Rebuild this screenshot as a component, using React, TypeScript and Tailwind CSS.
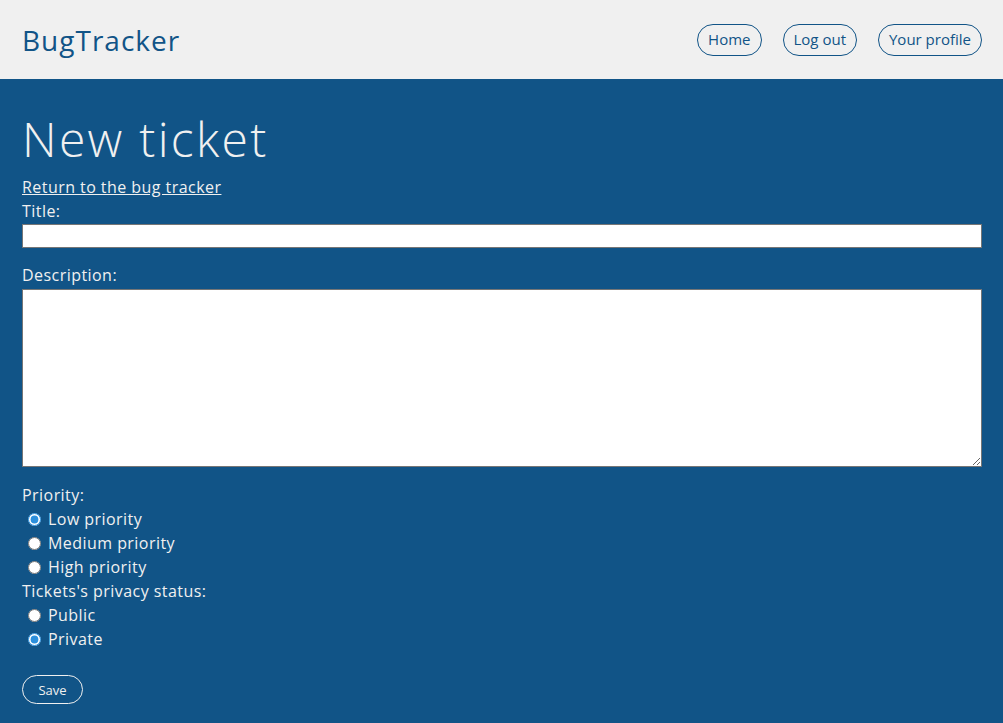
import { useState } from "react";

export default function App() {
  const [priority, setPriority] = useState("low");
  const [privacy, setPrivacy] = useState("private");

  const radio =
    "appearance-auto accent-[#2b8fdc] w-[13px] h-[13px] ml-[6px] mr-[7px] shrink-0";

  return (
    <div className="min-h-[723px] bg-[#115487] font-['Open_Sans',sans-serif] text-[#f0f0f0]">
      <header className="h-[79px] bg-[#f0f0f0] flex items-center justify-between pl-[22px] pr-[21px]">
        <h1 className="text-[28px] text-[#115487] leading-none tracking-[1px]">BugTracker</h1>
        <nav className="flex gap-[21px]">
          <button className="h-[32px] px-[10px] rounded-full border border-[#115487] text-[#115487] text-[15px]">
            Home
          </button>
          <button className="h-[32px] px-[10px] rounded-full border border-[#115487] text-[#115487] text-[15px]">
            Log out
          </button>
          <button className="h-[32px] px-[10px] rounded-full border border-[#115487] text-[#115487] text-[15px]">
            Your profile
          </button>
        </nav>
      </header>

      <main className="pl-[22px] pr-[21px] pt-[30px]">
        <h2 className="text-[48px] leading-[60px] font-light tracking-[2.3px]">New ticket</h2>
        <a href="#" className="block mt-[6px] text-[16px] leading-[24px] underline tracking-[0.45px]">
          Return to the bug tracker
        </a>
        <form className="flex flex-col text-[16px] leading-[24px] tracking-[0.45px]">
          <label>Title:</label>
          <input type="text" className="mt-[1px] h-[24px] w-full bg-white border border-[#767676] text-black px-1" />

          <label className="mt-[15px]">Description:</label>
          <textarea className="mt-[2px] h-[178px] w-full bg-white border border-[#767676] text-black" />

          <label className="mt-[16px]">Priority:</label>
          {[
            ["low", "Low priority"],
            ["medium", "Medium priority"],
            ["high", "High priority"],
          ].map(([v, t]) => (
            <label key={v} className="flex items-center h-[24px]">
              <input
                type="radio"
                name="priority"
                className={radio}
                checked={priority === v}
                onChange={() => setPriority(v)}
              />
              {t}
            </label>
          ))}

          <label>Tickets's privacy status:</label>
          {[
            ["public", "Public"],
            ["private", "Private"],
          ].map(([v, t]) => (
            <label key={v} className="flex items-center h-[24px]">
              <input
                type="radio"
                name="privacy"
                className={radio}
                checked={privacy === v}
                onChange={() => setPrivacy(v)}
              />
              {t}
            </label>
          ))}

          <div className="mt-[24px]">
            <button
              type="button"
              className="h-[29px] w-[61px] rounded-full border border-[#f0f0f0] text-[13px] tracking-normal"
            >
              Save
            </button>
          </div>
        </form>
      </main>
    </div>
  );
}
